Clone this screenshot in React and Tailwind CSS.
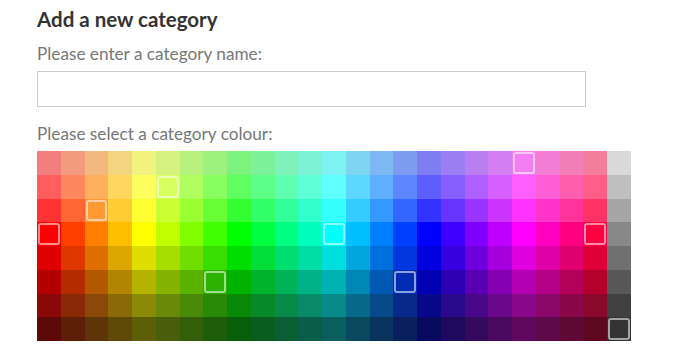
import React from 'react';

// saturation / value for each row of the swatch grid, lightest to darkest
const ROWS = [
  { s: 0.48, v: 0.95, grey: 217 },
  { s: 0.63, v: 1, grey: 191 },
  { s: 0.8, v: 1, grey: 166 },
  { s: 1, v: 1, grey: 136 },
  { s: 1, v: 0.87, grey: 112 },
  { s: 1, v: 0.7, grey: 88 },
  { s: 0.94, v: 0.54, grey: 64 },
  { s: 0.9, v: 0.37, grey: 51 },
];

const SELECTED = ['0-20', '1-5', '2-2', '3-0', '3-12', '3-23', '5-7', '5-15', '7-24'];

const hsv = (h, s, v) => {
  const f = (n) => {
    const k = (n + h / 60) % 6;
    return Math.round(255 * (v - v * s * Math.max(0, Math.min(k, 4 - k, 1))));
  };
  return `rgb(${f(5)}, ${f(3)}, ${f(1)})`;
};

const Swatch = ({ color, selected }) => (
  <div className="w-full h-full cursor-pointer" style={{ backgroundColor: color }}>
    {selected && (
      <div className="m-px h-[calc(100%-2px)] border-2 border-white/55 rounded-[3px]" />
    )}
  </div>
);

export default function App() {
  const cells = [];
  ROWS.forEach((row, r) => {
    for (let c = 0; c < 25; c++) {
      const color =
        c === 24 ? `rgb(${row.grey}, ${row.grey}, ${row.grey})` : hsv(c * 15, row.s, row.v);
      cells.push(<Swatch key={`${r}-${c}`} color={color} selected={SELECTED.includes(`${r}-${c}`)} />);
    }
  });

  return (
    <div className="min-h-screen bg-white pl-[37px] pt-[6px] font-['Lato','Open_Sans',sans-serif]">
      {/* Title */}
      <h2 className="text-[20.5px] leading-[26px] font-bold text-[#333]">Add a new category</h2>

      {/* Name */}
      <label className="block mt-[12px] text-[17.2px] leading-[20px] text-[#777]">
        Please enter a category name:
      </label>
      <input
        type="text"
        className="block mt-[7px] w-[549px] h-[36px] border border-[#ccc] bg-white px-2 outline-none"
      />

      {/* Colour */}
      <label className="block mt-[17px] text-[17.2px] leading-[20px] text-[#777]">
        Please select a category colour:
      </label>
      <div className="mt-[7px] grid w-[594px] h-[190px] grid-cols-[repeat(25,minmax(0,1fr))] grid-rows-[repeat(8,minmax(0,1fr))]">
        {cells}
      </div>
    </div>
  );
}
